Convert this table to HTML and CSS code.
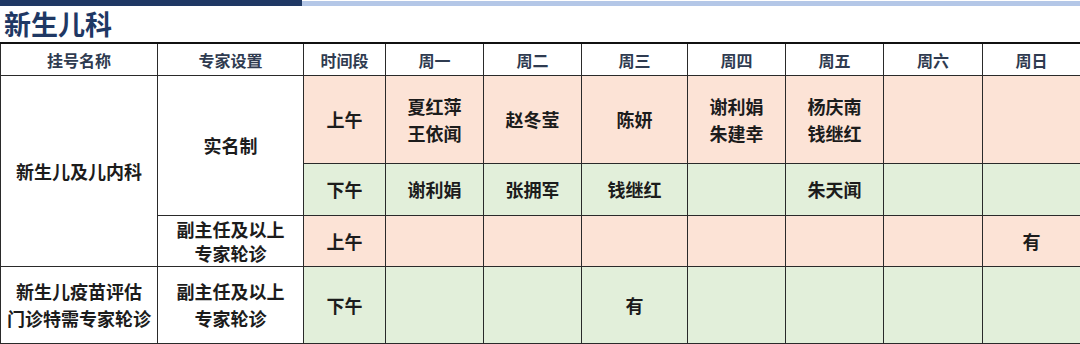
FILE: index.html
```html
<!DOCTYPE html>
<html lang="zh">
<head>
<meta charset="utf-8">
<title>新生儿科</title>
<link rel="stylesheet" href="styles.css">
</head>
<body>
<div class="topbar"><div class="bar-dark"></div><div class="bar-light"></div></div>
<h1 class="title">新生儿科</h1>
<table class="schedule">
  <colgroup>
    <col class="c-name"><col class="c-expert"><col class="c-period">
    <col class="c-day"><col class="c-day"><col class="c-day-wide"><col class="c-day"><col class="c-day"><col class="c-day6"><col class="c-day7">
  </colgroup>
  <thead>
    <tr class="head">
      <th>挂号名称</th><th>专家设置</th><th>时间段</th><th>周一</th><th>周二</th><th>周三</th><th>周四</th><th>周五</th><th>周六</th><th>周日</th>
    </tr>
  </thead>
  <tbody>
    <tr class="am r1">
      <td rowspan="3" class="name">新生儿及儿内科</td>
      <td rowspan="2" class="expert">实名制</td>
      <td>上午</td>
      <td>夏红萍<br>王依闻</td><td>赵冬莹</td><td>陈妍</td><td>谢利娟<br>朱建幸</td><td>杨庆南<br>钱继红</td><td></td><td></td>
    </tr>
    <tr class="pm r2">
      <td>下午</td>
      <td>谢利娟</td><td>张拥军</td><td>钱继红</td><td></td><td>朱天闻</td><td></td><td></td>
    </tr>
    <tr class="am r3">
      <td class="expert">副主任及以上<br>专家轮诊</td>
      <td>上午</td>
      <td></td><td></td><td></td><td></td><td></td><td></td><td>有</td>
    </tr>
    <tr class="pm r4">
      <td class="name">新生儿疫苗评估<br>门诊特需专家轮诊</td>
      <td class="expert">副主任及以上<br>专家轮诊</td>
      <td>下午</td>
      <td></td><td></td><td>有</td><td></td><td></td><td></td><td></td>
    </tr>
  </tbody>
</table>
</body>
</html>
```
FILE: styles.css
```css
html, body {
  margin: 0;
  padding: 0;
  background: #ffffff;
}
body {
  width: 1080px;
  height: 344px;
  overflow: hidden;
  font-family: "Noto Sans CJK SC", "Noto Sans", sans-serif;
}
.topbar {
  display: flex;
  height: 6px;
}
.bar-dark {
  width: 302px;
  background: #1f3864;
}
.bar-light {
  flex: 1;
  margin-top: 1px;
  background: #b4c7e7;
}
.title {
  margin: 0;
  padding-left: 4px;
  height: 36px;
  line-height: 36px;
  font-size: 27px;
  font-weight: 700;
  color: #1f3864;
  letter-spacing: 0;
}
.schedule {
  border-collapse: collapse;
  table-layout: fixed;
  width: 1080px;
  border-top: 2px solid #111;
}
.c-name { width: 157px; }
.c-expert { width: 146px; }
.c-period { width: 82px; }
.c-day { width: 98px; }
.c-day-wide { width: 106px; }
.c-day6 { width: 99px; }
.c-day7 { width: 98px; }
.schedule th,
.schedule td {
  border: 1px solid #2a2a2a;
  padding: 0;
  text-align: center;
  vertical-align: middle;
  font-weight: 700;
}
.schedule th {
  height: 31px;
  font-size: 16px;
  color: #2f3b50;
  background: #ffffff;
}
.schedule td {
  font-size: 18px;
  line-height: 27px;
  color: #1c1c1c;
}
.schedule .head th { border-top: 2px solid #111; }
.am td { background: #fce3d6; }
.pm td { background: #e2efda; }
.schedule td.name,
.schedule td.expert { background: #ffffff; }
.r1 td { height: 87px; }
.r2 td { height: 51px; }
.r3 td { height: 50px; }
.r3 td.expert { line-height: 24px; }
.r4 td { height: 76px; }
```
